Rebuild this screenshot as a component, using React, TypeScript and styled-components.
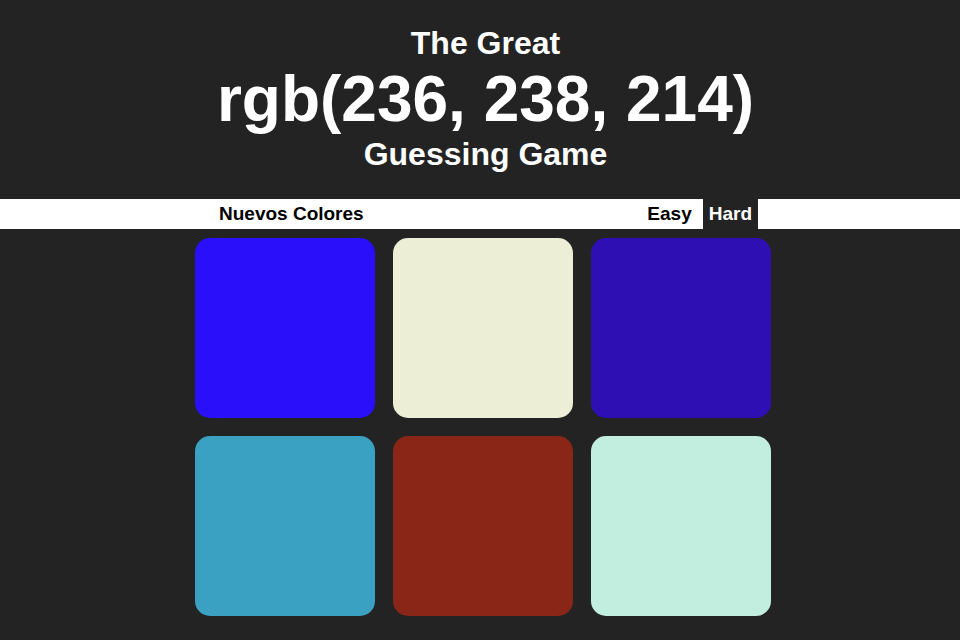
import React, { useState } from "react";
import styled, { createGlobalStyle } from "styled-components";

const GlobalStyle = createGlobalStyle`
  body {
    margin: 0;
    background: #232323;
    font-family: "Liberation Sans", Arial, sans-serif;
  }
`;

const Header = styled.h1`
  margin: 0;
  padding: 25px 0 0 11px;
  text-align: center;
  color: #ffffff;
  font-size: 32px;
  font-weight: bold;
  line-height: normal;
`;

const ColorDisplay = styled.span`
  font-size: 64px;
`;

const Stripe = styled.div`
  margin-top: 26px;
  height: 30px;
  background: #ffffff;
`;

const StripeInner = styled.div`
  width: 600px;
  height: 100%;
  margin: 0 auto;
  padding: 0 22px 0 33px;
  box-sizing: border-box;
  display: flex;
  align-items: stretch;
`;

const Message = styled.span`
  flex: 1;
`;

const Button = styled.button<{ $selected?: boolean }>`
  border: none;
  outline: none;
  margin: 0;
  padding: 0 6px 1px;
  font-family: inherit;
  font-size: 19px;
  font-weight: bold;
  color: ${(p) => (p.$selected ? "#ffffff" : "#000000")};
  background: ${(p) => (p.$selected ? "#232323" : "#ffffff")};
  cursor: pointer;
  & + & {
    margin-left: 5px;
  }
`;

const Grid = styled.div`
  width: 576px;
  margin: 9px auto 0;
  padding-left: 6px;
  display: grid;
  grid-template-columns: repeat(3, 180px);
  gap: 18px;
`;

const Square = styled.div<{ $color: string }>`
  width: 180px;
  height: 180px;
  border-radius: 15px;
  background: ${(p) => p.$color};
`;

const colors = [
  "rgb(41, 15, 250)",
  "rgb(236, 238, 214)",
  "rgb(45, 15, 180)",
  "rgb(59, 161, 194)",
  "rgb(137, 38, 24)",
  "rgb(194, 238, 224)",
];

const App: React.FC = () => {
  const [hard, setHard] = useState(true);

  return (
    <>
      <GlobalStyle />
      <Header>
        The Great
        <br />
        <ColorDisplay>rgb(236, 238, 214)</ColorDisplay>
        <br />
        Guessing Game
      </Header>
      <Stripe>
        <StripeInner>
          <Button>Nuevos Colores</Button>
          <Message />
          <Button $selected={!hard} onClick={() => setHard(false)}>
            Easy
          </Button>
          <Button $selected={hard} onClick={() => setHard(true)}>
            Hard
          </Button>
        </StripeInner>
      </Stripe>
      <Grid>
        {colors.map((c, i) => (
          <Square key={i} $color={c} />
        ))}
      </Grid>
    </>
  );
};

export default App;
